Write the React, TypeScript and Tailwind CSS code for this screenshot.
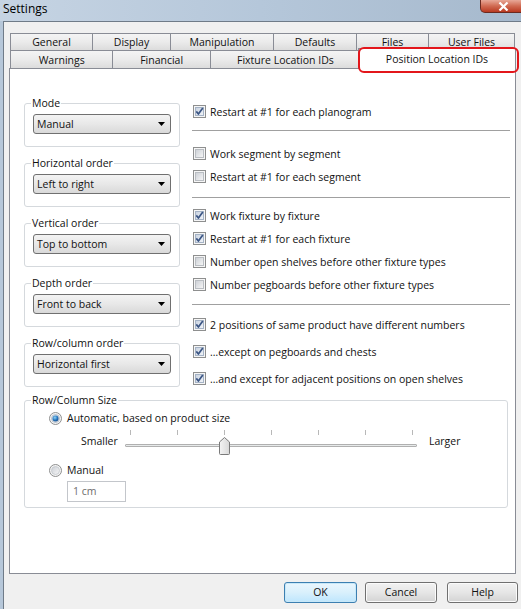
import React from "react";

function CheckBox({ checked }: { checked: boolean }) {
  return (
    <svg width="13" height="13" viewBox="0 0 13 13" className="shrink-0">
      <defs>
        <linearGradient id="cbin" x1="0" y1="0" x2="1" y2="1">
          <stop offset="0" stopColor="#cbcfd5" />
          <stop offset="1" stopColor="#f7f7f7" />
        </linearGradient>
        <linearGradient id="cbinc" x1="0" y1="0" x2="1" y2="1">
          <stop offset="0" stopColor="#c8d2e0" />
          <stop offset="1" stopColor="#f2f5f9" />
        </linearGradient>
      </defs>
      <rect x="0.5" y="0.5" width="12" height="12" fill="#f6f6f6" stroke="#8e8f8f" />
      <rect x="2.5" y="2.5" width="8" height="8" fill={checked ? "url(#cbinc)" : "url(#cbin)"} stroke={checked ? "#a5b3c6" : "#b9bdc2"} />
      {checked && (
        <path d="M3.3 6.4 L5.4 9 L9.8 3" fill="none" stroke="#3b5584" strokeWidth="1.7" strokeLinejoin="round" />
      )}
    </svg>
  );
}

function Radio({ checked }: { checked: boolean }) {
  return (
    <svg width="13" height="13" viewBox="0 0 13 13" className="shrink-0">
      <defs>
        <linearGradient id="rdin" x1="0" y1="0" x2="1" y2="1">
          <stop offset="0" stopColor="#cbcfd5" />
          <stop offset="1" stopColor="#f7f7f7" />
        </linearGradient>
        <radialGradient id="rdsel" cx="0.4" cy="0.35" r="0.7">
          <stop offset="0" stopColor="#8fd3f5" />
          <stop offset="0.6" stopColor="#2776be" />
          <stop offset="1" stopColor="#164a85" />
        </radialGradient>
      </defs>
      <circle cx="6.5" cy="6.5" r="6" fill="#f4f4f4" stroke="#8e8f8f" />
      <circle cx="6.5" cy="6.5" r="4" fill={checked ? "#e3e8ee" : "url(#rdin)"} stroke={checked ? "#a9b4c2" : "#c2c6cb"} strokeWidth="0.8" />
      {checked && <circle cx="6.5" cy="6.5" r="3" fill="url(#rdsel)" />}
    </svg>
  );
}

function Select({ value }: { value: string }) {
  return (
    <div className="mt-[3px] h-[20px] w-[138px] flex items-center justify-between rounded-[3px] border border-[#707070] bg-gradient-to-b from-[#f3f3f3] via-[#e8e8e8] to-[#d9d9d9] pl-[3px] pr-[5px]">
      <span className="leading-[14px]">{value}</span>
      <svg width="7" height="4" viewBox="0 0 7 4">
        <path d="M0 0 H7 L3.5 4 Z" fill="#000" />
      </svg>
    </div>
  );
}

function Group({ title, value }: { title: string; value: string }) {
  return (
    <fieldset className="h-[52px] rounded-[3px] border border-[#d5d9dd] px-[8px] pb-[12px]">
      <legend className="-ml-[2px] px-[1px] leading-[16px]">{title}</legend>
      <Select value={value} />
    </fieldset>
  );
}

function Row({ checked, label, h }: { checked: boolean; label: string; h: string }) {
  return (
    <div className={`flex items-center gap-[4px] pl-[1px] ${h}`}>
      <CheckBox checked={checked} />
      <span className="leading-[14px]">{label}</span>
    </div>
  );
}

function Tab({ label, w, last }: { label: string; w: string; last?: boolean }) {
  return (
    <div
      className={`${w} h-full flex items-center justify-center border-l border-t border-[#898c95] ${last ? "border-r" : ""} bg-gradient-to-b from-[#f4f4f4] via-[#ebebeb] to-[#dcdcdc] leading-[14px]`}
    >
      {label}
    </div>
  );
}

function Button({ label, w, primary }: { label: string; w: string; primary?: boolean }) {
  return (
    <div
      className={`${w} h-[21px] flex items-center justify-center rounded-[3px] border ${
        primary
          ? "border-[#3c7fb1] bg-gradient-to-b from-[#eaf6fd] via-[#d9f0fc] to-[#bee6fd] shadow-[inset_0_0_0_1px_#c8e8f8]"
          : "border-[#707070] bg-gradient-to-b from-[#f2f2f2] via-[#e6e6e6] to-[#d3d3d3] shadow-[inset_0_0_0_1px_#fbfbfb]"
      }`}
    >
      {label}
    </div>
  );
}

export default function App() {
  return (
    <div className="w-[521px] h-[609px] overflow-hidden flex flex-col bg-[#b6c7d9] font-['Open_Sans',sans-serif] text-[10.5px] text-[#111]">
      {/* title bar */}
      <div className="h-[21px] shrink-0 flex items-start justify-between bg-gradient-to-r from-[#c6d4e3] via-[#b5c7da] to-[#a6b9cd]">
        <div className="pl-[3px] pt-[1px] text-[12px] leading-[16px] text-black">Settings</div>
        <div className="w-[46px] h-[13px] -mr-[5px] flex items-center justify-center rounded-bl-[5px] border border-t-0 border-[#6b2a20] bg-gradient-to-b from-[#e7a898] via-[#d06a52] to-[#b8381f]">
          <svg width="11" height="9" viewBox="0 0 11 9">
            <path d="M1.5 0.5 L9.5 8.5 M9.5 0.5 L1.5 8.5" stroke="#fff" strokeWidth="2.2" />
          </svg>
        </div>
      </div>

      {/* body */}
      <div className="flex-1 flex">
        <div className="w-[3px] shrink-0" />
        <div className="flex-1 flex flex-col border-l border-t border-[#6f7b88] bg-[#f0f0f0] pl-[5px] pt-[11px]">
          {/* tabs */}
          <div className="relative w-[507px] pl-[1px]">
            <div className="flex h-[17px]">
              <Tab label="General" w="w-[82px]" />
              <Tab label="Display" w="w-[78px]" />
              <Tab label="Manipulation" w="w-[103px]" />
              <Tab label="Defaults" w="w-[83px]" />
              <Tab label="Files" w="w-[72px]" />
              <Tab label="User Files" w="w-[87px]" last />
            </div>
            <div className="flex h-[18px] items-end">
              <Tab label="Warnings" w="w-[103px]" />
              <Tab label="Financial" w="w-[98px]" />
              <Tab label="Fixture Location IDs" w="w-[151px]" />
              <div className="relative z-10 -ml-[2px] -mb-px w-[158px] h-[21px] shrink-0 flex items-start justify-center border-l border-t border-r border-[#898c95] bg-white pt-[3px] leading-[14px]">
                Position Location IDs
                <div className="absolute -left-[1px] -top-[2px] -right-[4px] -bottom-[4px] rounded-[6px] border-[2.5px] border-[#e3161b]" />
              </div>
            </div>
          </div>

          {/* tab page */}
          <div className="w-[507px] h-[506px] shrink-0 border border-[#898c95] bg-white pl-[14px] pt-[26px]">
            <div className="flex h-[297px]">
              <div className="w-[154px] flex flex-col gap-[8px]">
                <Group title="Mode" value="Manual" />
                <Group title="Horizontal order" value="Left to right" />
                <Group title="Vertical order" value="Top to bottom" />
                <Group title="Depth order" value="Front to back" />
                <Group title="Row/column order" value="Horizontal first" />
              </div>
              <div className="ml-[14px] w-[318px] flex flex-col">
                <div className="mt-[5px]">
                  <Row checked label="Restart at #1 for each planogram" h="h-[23px]" />
                </div>
                <div className="mt-[7px] h-px bg-[#a0a0a0]" />
                <div className="mt-[11px]">
                  <Row checked={false} label="Work segment by segment" h="h-[23px]" />
                  <Row checked={false} label="Restart at #1 for each segment" h="h-[23px]" />
                </div>
                <div className="mt-[9px] h-px bg-[#a0a0a0]" />
                <div className="mt-[6px]">
                  <Row checked label="Work fixture by fixture" h="h-[23px]" />
                  <Row checked label="Restart at #1 for each fixture" h="h-[23px]" />
                  <Row checked={false} label="Number open shelves before other fixture types" h="h-[23px]" />
                  <Row checked={false} label="Number pegboards before other fixture types" h="h-[23px]" />
                </div>
                <div className="mt-[8px] h-px bg-[#a0a0a0]" />
                <div className="mt-[6px]">
                  <Row checked label="2 positions of same product have different numbers" h="h-[27px]" />
                  <Row checked label={"\u2026except on pegboards and chests"} h="h-[27px]" />
                  <Row checked label={"\u2026and except for adjacent positions on open shelves"} h="h-[27px]" />
                </div>
              </div>
            </div>

            <fieldset className="w-[484px] rounded-[3px] border border-[#d5d9dd] px-[8px] pb-[5px]">
              <legend className="-ml-[2px] px-[1px] leading-[16px]">Row/Column Size</legend>
              <div className="mt-[2px] ml-[16px] h-[16px] flex items-center gap-[5px]">
                <Radio checked />
                <span className="leading-[14px]">Automatic, based on product size</span>
              </div>
              <div className="ml-[48px] h-[30px] flex items-center">
                <span className="w-[40px] leading-[14px]">Smaller</span>
                <div className="relative w-[300px] h-[30px]">
                  <div className="absolute left-[9px] w-[283px] top-[4px] h-[5px] flex justify-between">
                    {[0, 1, 2, 3, 4, 5, 6].map((i) => (
                      <div key={i} className="w-px h-full bg-[#b8b8b8]" />
                    ))}
                  </div>
                  <div className="absolute left-[4px] right-[4px] top-[18px] h-[3px] border border-[#b0b0b0] bg-[#e7eaea] rounded-[1px]" />
                  <svg className="absolute left-[98px] top-[11px]" width="11" height="18" viewBox="0 0 11 18">
                    <defs>
                      <linearGradient id="thumbg" x1="0" y1="0" x2="1" y2="0">
                        <stop offset="0" stopColor="#f4f4f4" />
                        <stop offset="1" stopColor="#d8d8d8" />
                      </linearGradient>
                    </defs>
                    <path d="M0.5 5 L5.5 0.5 L10.5 5 L10.5 16.5 Q10.5 17.5 9.5 17.5 L1.5 17.5 Q0.5 17.5 0.5 16.5 Z" fill="url(#thumbg)" stroke="#7a7a7a" />
                  </svg>
                </div>
                <span className="ml-[8px] leading-[14px]">Larger</span>
              </div>
              <div className="mt-[6px] ml-[16px] h-[16px] flex items-center gap-[5px]">
                <Radio checked={false} />
                <span className="leading-[14px]">Manual</span>
              </div>
              <div className="mt-[3px] ml-[34px] w-[59px] h-[21px] flex items-center border border-[#c3c6cb] bg-white pl-[5px] text-[#6d6d6d]">
                1 cm
              </div>
            </fieldset>
          </div>

          {/* buttons */}
          <div className="mt-[8px] flex justify-end pr-[3px]">
            <Button label="OK" w="w-[73px]" primary />
            <div className="w-[8px]" />
            <Button label="Cancel" w="w-[72px]" />
            <div className="w-[10px]" />
            <Button label="Help" w="w-[71px]" />
          </div>
        </div>
      </div>
    </div>
  );
}
